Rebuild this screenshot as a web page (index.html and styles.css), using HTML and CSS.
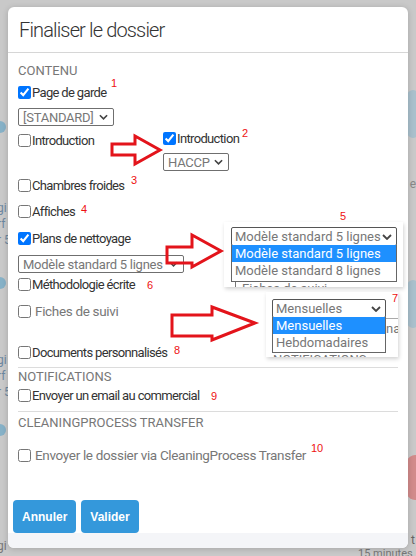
FILE: index.html
```html
<!DOCTYPE html>
<html lang="fr">
<head>
<meta charset="utf-8">
<title>Finaliser le dossier</title>
<link rel="stylesheet" href="styles.css">
</head>
<body>
<div class="page-bg">
  <span class="bg-dot d1"></span><span class="bg-dot d2"></span><span class="bg-dot d3"></span>
  <span class="bg-blob b1"></span><span class="bg-blob b2"></span><span class="bg-red"></span>
  <span class="bg-txt t1">gi<br>rf<br>r 5</span>
  <span class="bg-txt t2">gi<br>rf<br>r 5</span>
  <span class="bg-txt t3">gi</span>
  <span class="bg-txt t4">e</span>
  <span class="bg-txt t5">t</span>
  <span class="bg-txt t6">15 minutes</span>
</div>

<div class="modal">
  <div class="modal-header"><h4>Finaliser le dossier</h4></div>
  <div class="modal-body">
    <div class="section">Contenu</div>
    <label class="check m3"><input type="checkbox" checked>Page de garde</label>
    <div class="selwrap w96 m7">
      <select class="sel"><option>[STANDARD]</option></select>
      <svg class="chev" viewBox="0 0 10 6" width="9" height="6"><path d="M1 1 L5 5 L9 1" fill="none" stroke="#444" stroke-width="1.8"/></svg>
    </div>

    <div class="intro-row">
      <label class="check intro-left"><input type="checkbox">Introduction</label>
      <div class="intro-right">
        <label class="check"><input type="checkbox" checked>Introduction</label>
        <div class="selwrap w66 m6">
          <select class="sel"><option>HACCP</option></select>
          <svg class="chev" viewBox="0 0 10 6" width="9" height="6"><path d="M1 1 L5 5 L9 1" fill="none" stroke="#444" stroke-width="1.8"/></svg>
        </div>
      </div>
    </div>

    <label class="check m5"><input type="checkbox">Chambres froides</label>
    <label class="check m8"><input type="checkbox">Affiches</label>
    <label class="check m9"><input type="checkbox" checked>Plans de nettoyage</label>
    <div class="selwrap w166 m8">
      <select class="sel"><option>Modèle standard 5 lignes</option></select>
      <svg class="chev" viewBox="0 0 10 6" width="9" height="6"><path d="M1 1 L5 5 L9 1" fill="none" stroke="#444" stroke-width="1.8"/></svg>
    </div>
    <label class="check m2"><input type="checkbox">Méthodologie écrite</label>
    <label class="check light m9"><input type="checkbox">Fiches de suivi</label>
    <label class="check m23"><input type="checkbox">Documents personnalisés</label>

    <hr class="sep m6">
    <div class="section">Notifications</div>
    <label class="check"><input type="checkbox">Envoyer un email au commercial</label>

    <hr class="sep m7">
    <div class="section section-tight">CleaningProcess Transfer</div>
    <label class="check light m15"><input type="checkbox">Envoyer le dossier via CleaningProcess Transfer</label>

    <div class="actions">
      <button class="btn">Annuler</button>
      <button class="btn">Valider</button>
    </div>
  </div>
  <div class="modal-footer"></div>
</div>

<!-- annotations drawn over the screenshot -->
<div class="snap snap5">
  <div class="fake-select">Modèle standard 5 lignes<svg class="fchev" viewBox="0 0 10 6" width="10" height="6"><path d="M1 1 L5 5 L9 1" fill="none" stroke="#444" stroke-width="1.8"/></svg></div>
  <div class="fake-list">
    <div class="opt selected">Modèle standard 5 lignes</div>
    <div class="opt">Modèle standard 8 lignes</div>
  </div>
  <div class="snap-under">Fiches de suivi</div>
</div>

<div class="snap snap7">
  <div class="fake-select">Mensuelles<svg class="fchev" viewBox="0 0 10 6" width="10" height="6"><path d="M1 1 L5 5 L9 1" fill="none" stroke="#444" stroke-width="1.8"/></svg></div>
  <div class="fake-list">
    <div class="opt selected">Mensuelles</div>
    <div class="opt">Hebdomadaires</div>
  </div>
  <div class="snap-under">Notifications</div>
  <span class="snap-side">na</span>
</div>

<svg class="arrows" width="416" height="556" viewBox="0 0 416 556">
  <polygon points="112,144 135,144 135,136 160,150 135,164 135,155 112,155"/>
  <polygon points="167,247 192,247 192,235 221,251 192,267 192,263 167,263"/>
  <polygon points="172,315 212,315 212,307 255,323 212,340 212,336 172,336"/>
</svg>

<span class="num n1">1</span>
<span class="num n2">2</span>
<span class="num n3">3</span>
<span class="num n4">4</span>
<span class="num n5">5</span>
<span class="num n6">6</span>
<span class="num n7">7</span>
<span class="num n8">8</span>
<span class="num n9">9</span>
<span class="num n10">10</span>
</body>
</html>
```

FILE: styles.css
```css
html, body { margin: 0; padding: 0; }
body {
  width: 416px;
  height: 556px;
  overflow: hidden;
  position: relative;
  background: #c9c9c9;
  font-family: Roboto, "Liberation Sans", Arial, sans-serif;
  padding: 7px 8px 0;
  box-sizing: border-box;
}

/* dimmed page behind the dialog */
.page-bg { position: absolute; inset: 0; }
.bg-dot { position: absolute; left: -6px; width: 12px; height: 12px; border-radius: 50%; background: #6aa6c6; opacity: .7; }
.d1 { top: 121px; } .d2 { top: 277px; } .d3 { top: 424px; }
.bg-blob { position: absolute; right: -8px; width: 22px; height: 48px; border-radius: 50%; background: #a9c0cc; }
.b1 { top: 90px; } .b2 { top: 280px; }
.bg-red { position: absolute; right: -12px; top: 455px; width: 26px; height: 45px; border-radius: 50%; background: #d28b8b; }
.bg-txt { position: absolute; font-size: 12px; line-height: 16px; color: #6d87a0; }
.t1 { left: -3px; top: 200px; }
.t2 { left: -3px; top: 352px; }
.t3 { left: -3px; top: 538px; color: #777; }
.t4 { right: 0; top: 176px; color: #888; }
.t5 { right: 1px; top: 532px; color: #666; }
.t6 { left: 358px; top: 546px; color: #777; font-size: 11px; }

.modal {
  position: relative;
  width: 400px;
  height: 541px;
  background: #fff;
  border-radius: 6px;
  box-shadow: 0 1px 6px rgba(0,0,0,.18);
  display: flex;
  flex-direction: column;
  overflow: hidden;
}
.modal-header {
  height: 46px;
  box-sizing: border-box;
  border-bottom: 1px solid #d6d6d6;
  padding: 0 11px;
  display: flex;
  align-items: center;
}
.modal-header h4 {
  margin: 0;
  font-size: 20px;
  font-weight: 300;
  letter-spacing: -0.85px;
  color: #333;
}
.modal-body {
  flex: 1;
  padding: 9px 10px 0;
  display: flex;
  flex-direction: column;
  align-items: flex-start;
}
.section {
  font-size: 13px;
  line-height: 18px;
  color: #777;
  text-transform: uppercase;
}
.section-tight { line-height: 16px; margin-top: 3px; }

.check {
  display: flex;
  align-items: center;
  height: 18px;
  font-size: 13px;
  letter-spacing: -0.65px;
  color: #333;
  white-space: nowrap;
}
.check input { margin: 0 1px 0 0; width: 13px; height: 13px; }
.check.light { color: #777; font-size: 13.5px; letter-spacing: -0.33px; }
.check.light input { margin: 0 4px 0 0; }

.selwrap { display: flex; align-items: center; }
.sel {
  appearance: none;
  -webkit-appearance: none;
  width: 100%;
  height: 18px;
  box-sizing: border-box;
  font-family: Roboto, "Liberation Sans", Arial, sans-serif;
  font-size: 13px;
  letter-spacing: -0.25px;
  color: #777;
  border: 1px solid #6f6f6f;
  border-radius: 2px;
  background: #fff;
  padding: 0 14px 0 4px;
  margin: 0;
}
.chev { flex: none; margin-left: -15px; pointer-events: none; }
.w96 { width: 96px; }
.w66 { width: 66px; }
.w166 { width: 166px; }

.intro-row { display: flex; align-items: flex-start; margin-top: 3px; width: 100%; }
.intro-left { width: 145px; margin-top: 2px; }
.intro-right { display: flex; flex-direction: column; align-items: flex-start; }

.m2 { margin-top: 2px; } .m3 { margin-top: 3px; } .m5 { margin-top: 5px; }
.m6 { margin-top: 6px; } .m7 { margin-top: 7px; } .m8 { margin-top: 8px; }
.m9 { margin-top: 9px; } .m15 { margin-top: 15px; } .m23 { margin-top: 23px; }

.sep {
  width: 100%;
  border: 0;
  border-top: 1px solid #dcdcdc;
  margin-bottom: 0;
  margin-left: 0;
  margin-right: 0;
  height: 0;
}

.actions {
  margin-top: auto;
  margin-left: -5px;
  display: flex;
  gap: 5px;
}
.btn {
  height: 33px;
  padding: 0 9px;
  border: 0;
  border-radius: 4px;
  background: #3498db;
  color: #fff;
  font-family: "Liberation Sans", Arial, sans-serif;
  font-weight: bold;
  font-size: 12px;
}
.modal-footer { height: 15px; background: #f4f5f8; }

/* pasted dropdown snapshots */
.snap {
  position: absolute;
  background: #fff;
  box-shadow: 1px 2px 4px rgba(0,0,0,.18);
  overflow: hidden;
}
.snap5 { left: 224px; top: 222px; width: 179px; height: 65px; }
.snap7 { left: 266px; top: 292px; width: 132px; height: 65px; }
.fake-select {
  position: absolute;
  box-sizing: border-box;
  height: 19px;
  border: 1px solid #555;
  border-radius: 2px;
  font-size: 13px;
  line-height: 17px;
  color: #777;
  padding-left: 3px;
}
.fchev { position: absolute; right: 4px; top: 6px; }
.fake-list {
  position: absolute;
  box-sizing: border-box;
  border: 1px solid #666;
  border-top: 0;
  background: #fff;
  font-size: 13px;
}
.opt { height: 17px; line-height: 17px; padding-left: 3px; color: #777; }
.opt.selected { background: #1e90ff; color: #fff; }
.snap5 .fake-select { left: 7px; top: 5px; width: 166px; }
.snap5 .fake-list { left: 7px; top: 23px; width: 166px; height: 37px; }
.snap7 .fake-select { left: 6px; top: 7px; width: 114px; }
.snap7 .fake-list { left: 6px; top: 25px; width: 114px; height: 36px; }
.snap-under {
  position: absolute;
  font-size: 13px;
  color: #777;
  line-height: 14px;
}
.snap5 .snap-under { left: 11px; top: 60px; border-left: 1px solid #777; padding-left: 6px; }
.snap7 .snap-under { left: 7px; top: 61px; text-transform: uppercase; }
.snap-side { position: absolute; left: 120px; top: 26px; font-size: 13px; color: #777; border-top: 1px solid #aaa; padding-top: 2px; }

.arrows { position: absolute; left: 0; top: 0; pointer-events: none; }
.arrows polygon { fill: none; stroke: #e3141b; stroke-width: 3; stroke-linejoin: miter; }

.num {
  position: absolute;
  font-family: "Liberation Sans", Arial, sans-serif;
  font-size: 11px;
  line-height: 11px;
  color: #ee1111;
}
.n1 { left: 111px; top: 78px; }
.n2 { left: 242px; top: 128px; }
.n3 { left: 131px; top: 175px; }
.n4 { left: 81px; top: 204px; }
.n5 { left: 340px; top: 211px; }
.n6 { left: 147px; top: 280px; }
.n7 { left: 392px; top: 293px; }
.n8 { left: 174px; top: 345px; }
.n9 { left: 211px; top: 391px; }
.n10 { left: 311px; top: 443px; }
```
